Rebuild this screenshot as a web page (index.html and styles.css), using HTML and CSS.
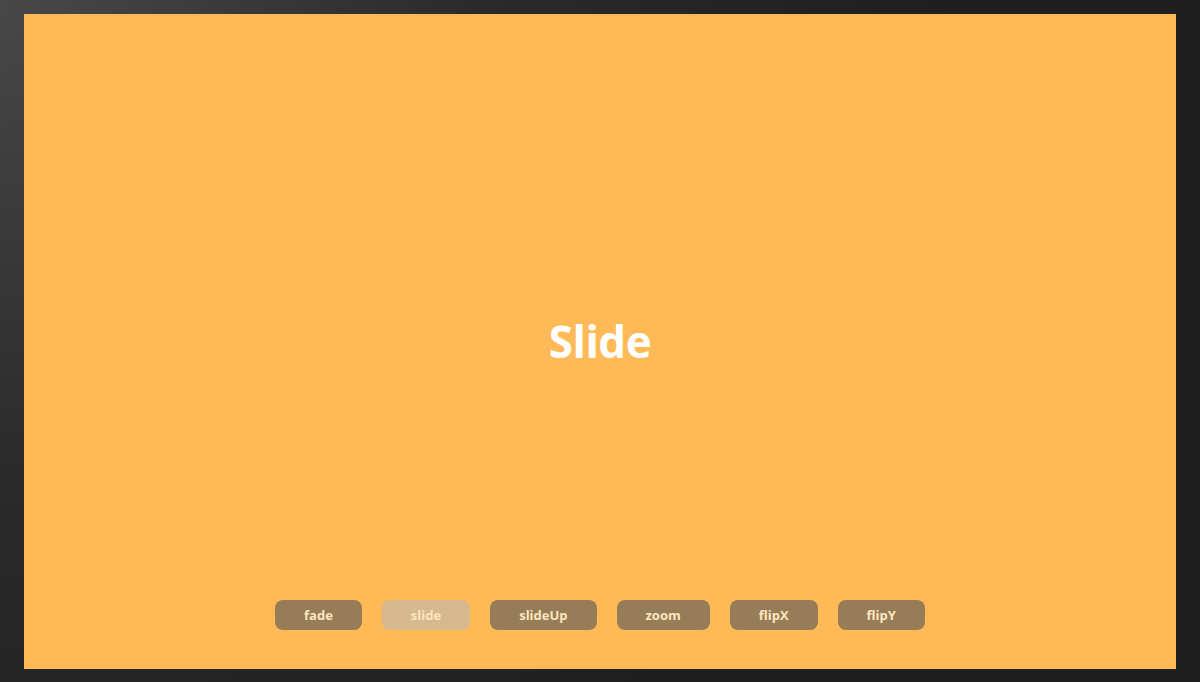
FILE: index.html
```html
<!DOCTYPE html>
<html>
<head>
<meta charset="utf-8">
<link rel="stylesheet" href="styles.css">
</head>
<body>
<div class="stage">
  <div class="slide-title">Slide</div>
  <div class="controls">
    <button class="btn">fade</button>
    <button class="btn active">slide</button>
    <button class="btn">slideUp</button>
    <button class="btn">zoom</button>
    <button class="btn">flipX</button>
    <button class="btn">flipY</button>
  </div>
</div>
</body>
</html>
```
FILE: styles.css
```css
html, body {
  margin: 0;
  height: 100%;
}
body {
  background: radial-gradient(circle at 0 0, #484848 0%, #2a2a2a 35%, #1e1e1e 70%);
  display: flex;
  align-items: center;
  justify-content: center;
  font-family: "Open Sans", "Noto Sans", sans-serif;
  overflow: hidden;
}
.stage {
  width: 96vw;
  height: 655px;
  background: #ffb957;
  display: grid;
  place-items: center;
  position: relative;
}
.slide-title {
  color: #ffffff;
  font-weight: 700;
  font-size: 44px;
  letter-spacing: -0.5px;
  line-height: 1;
}
.controls {
  position: absolute;
  left: 0;
  right: 0;
  bottom: 39px;
  display: flex;
  justify-content: center;
  gap: 20px;
}
.btn {
  height: 30px;
  padding: 0 29px;
  border: none;
  border-radius: 8px;
  background: #977d57;
  color: #fde5c0;
  font-family: "Open Sans", "Noto Sans", sans-serif;
  font-weight: 700;
  font-size: 13px;
}
.btn.active {
  background: #d6b98f;
}
```
